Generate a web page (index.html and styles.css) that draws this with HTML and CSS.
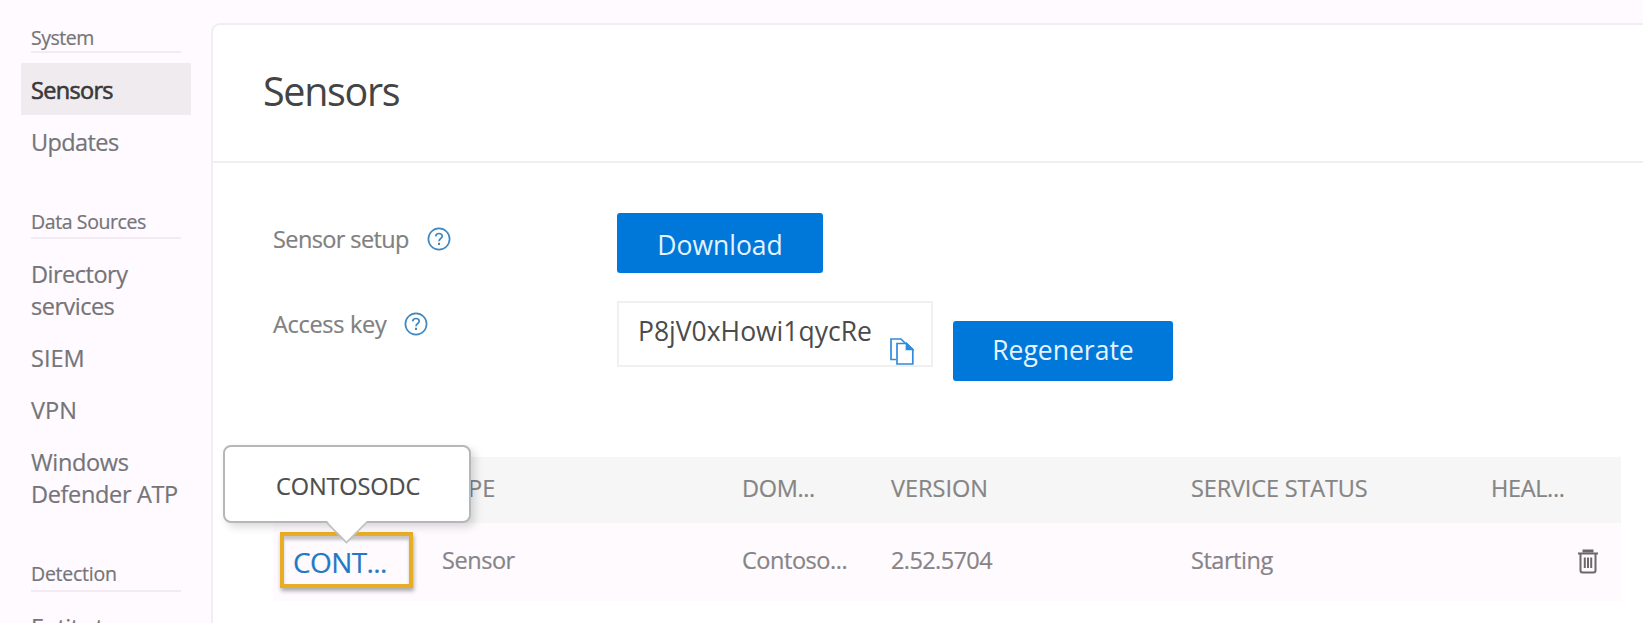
FILE: index.html
```html
<!DOCTYPE html>
<html lang="en">
<head>
<meta charset="utf-8">
<title>Sensors</title>
<link rel="stylesheet" href="styles.css">
</head>
<body>
<div class="app">
  <nav class="sidebar">
    <section class="group">
      <h2 class="group-title title-system">System</h2>
      <a class="item active">Sensors</a>
      <a class="item item-updates">Updates</a>
    </section>
    <section class="group">
      <h2 class="group-title">Data Sources</h2>
      <a class="item">Directory<br>services</a>
      <a class="item caps">SIEM</a>
      <a class="item caps">VPN</a>
      <a class="item item-defender">Windows<br>Defender ATP</a>
    </section>
    <section class="group">
      <h2 class="group-title title-detection">Detection</h2>
      <a class="item">Entity tags</a>
    </section>
  </nav>
  <main class="panel">
    <header class="panel-header"><h1 class="title">Sensors</h1></header>
    <div class="form">
      <div class="row row-setup">
        <div class="label label-setup"><span>Sensor setup</span>
          <svg class="help" viewBox="0 0 24 24"><circle cx="12" cy="12" r="10.6"/><path d="M8.7 9.4C8.8 7.4 10.2 6.5 12 6.5C13.9 6.5 15.2 7.6 15.2 9.2C15.2 11.4 12 11.600 12 14.2"/><path class="dot" d="M12 15.7V17.9"/></svg>
        </div>
        <button class="button download">Download</button>
      </div>
      <div class="row row-key">
        <div class="label label-key"><span>Access key</span>
          <svg class="help" viewBox="0 0 24 24"><circle cx="12" cy="12" r="10.6"/><path d="M8.7 9.4C8.8 7.4 10.2 6.5 12 6.5C13.9 6.5 15.2 7.6 15.2 9.2C15.2 11.4 12 11.600 12 14.2"/><path class="dot" d="M12 15.7V17.9"/></svg>
        </div>
        <div class="key-field"><span class="key-value">P8jV0xHowi1qycRe</span>
          <svg class="copy" viewBox="0 0 24 27"><path d="M6 21.5H1V1H11L15 5"/><path d="M7 5.5H16.5L22.8 11.5V26H7Z"/><path class="fold" d="M16.500 5.500V11.500H22.800Z"/></svg>
        </div>
        <button class="button regenerate">Regenerate</button>
      </div>
    </div>
    <div class="table">
      <div class="tr head">
        <span></span><span>TYPE</span><span class="h-domain">DOM...</span><span>VERSION</span><span class="h-status">SERVICE STATUS</span><span class="h-health">HEAL...</span>
      </div>
      <div class="tr data">
        <span class="cell-name"><a class="name">CONT...</a>
          <span class="tooltip">CONTOSODC<svg class="arrow" viewBox="0 0 42 24"><path class="arrow-fill" d="M1 0L20.5 21L41 0Z"/><path class="arrow-line" d="M1 2L20.5 21.5L40 2"/></svg></span>
        </span>
        <span>Sensor</span><span>Contoso...</span><span class="c-version">2.52.5704</span><span>Starting</span>
        <span class="cell-trash"><svg class="trash" viewBox="0 0 20 25"><path d="M0 4.5H20"/><path class="lid" d="M6 3.500V2H14V3.500"/><path d="M2.5 5V21.5Q2.5 23.5 4.5 23.5H15.5Q17.5 23.5 17.5 21.5V5"/><path class="bars" d="M6.800 8.5V19M10 8.5V19M13.200 8.5V19"/></svg></span>
      </div>
    </div>
  </main>
</div>
</body>
</html>
```
FILE: styles.css
```css
* { box-sizing: border-box; }
body {
  margin: 0;
  height: 623px;
  overflow: hidden;
  background: #fefaff;
  color: #757477;
  font-family: "Open Sans", "Noto Sans", sans-serif;
  font-size: 23.5px;
  line-height: 32px;
  white-space: nowrap;
}
.app { display: flex; height: 623px; overflow: hidden; }
.sidebar { width: 211px; flex: none; padding: 25px 0 0 21px; }
.group { display: flex; flex-direction: column; margin-bottom: 39px; }
.group-title {
  width: 150px;
  height: 33px;
  margin: 0 0 8px 10px;
  padding-top: 3px;
  border-bottom: 2px solid #f3ebf1;
  font-size: 19.5px;
  font-weight: 400;
  letter-spacing: -0.4px;
  line-height: 26px;
  -webkit-text-stroke: 0.2px;
}
.title-system { height: 28px; margin-bottom: 10px; padding-top: 0; letter-spacing: -0.5px; }
.title-detection { height: 34px; letter-spacing: -0.25px; }
.item { width: 170px; padding: 11px 10px 9px; letter-spacing: -0.5px; -webkit-text-stroke: 0.2px; }
.item-updates { letter-spacing: -0.6px; }
.item-defender { letter-spacing: -0.35px; }
.caps { letter-spacing: 0; }
.active { background: #efebef; color: #39383a; letter-spacing: -0.68px; -webkit-text-stroke: 0.6px; }
.panel {
  flex: 1;
  min-width: 0;
  height: 640px;
  margin-top: 23px;
  border: 2px solid #f1eef2;
  border-right: 0;
  border-radius: 9px 0 0 0;
  background: #fff;
}
.panel-header { height: 138px; padding: 39px 0 0 50px; border-bottom: 2px solid #f0eef0; }
.title { margin: 0; color: #444; font-size: 39.5px; font-weight: 400; letter-spacing: -1.35px; line-height: 54px; }
.form { padding: 50px 0 0 60px; height: 294px; }
.row { display: flex; align-items: flex-start; }
.row-setup { height: 88px; }
.label { display: flex; gap: 18px; width: 344px; color: #808080; -webkit-text-stroke: 0.2px; }
.label-setup { padding-top: 10px; letter-spacing: -0.6px; }
.label-key { padding-top: 7px; letter-spacing: -0.3px; }
.help { width: 24px; height: 24px; margin-top: 4px; fill: none; stroke: #3f88c2; stroke-width: 1.7; }
.help .dot { stroke-width: 2; }
.button {
  height: 60px;
  padding: 0;
  border: 0;
  border-radius: 3px;
  background: #0078d9;
  color: #e4f3ff;
  font: inherit;
  font-size: 26.5px;
}
.download { width: 206px; padding-top: 4px; }
.regenerate { width: 220px; margin: 20px 0 0 20px; padding-bottom: 2px; }
.key-field {
  display: flex;
  width: 316px;
  height: 66px;
  border: 2px solid #f0f0f0;
  padding: 12px 0 0 19px;
  color: #4b4b4b;
  font-size: 26.5px;
}
.key-value { width: 252px; }
.copy { width: 24px; height: 27px; margin-top: 23px; fill: none; stroke: #2f8bdc; stroke-width: 1.7; }
.copy .fold { fill: #2f8bdc; }
.table { width: 1348px; margin-left: 60px; }
.tr { display: grid; grid-template-columns: 169px 300px 149px 300px 300px 130px; align-items: start; -webkit-text-stroke: 0.2px; }
.head { height: 66px; background: #f6f6f6; color: #858585; padding-top: 15px; }
.h-status { letter-spacing: -0.15px; }
.h-domain, .h-health { letter-spacing: -0.35px; }
.data { height: 78px; background: #fefafe; color: #868487; padding-top: 21px; letter-spacing: -0.45px; }
.c-version { letter-spacing: -0.6px; }
.cell-name { position: relative; margin: -12px 0 0 7px; width: 133px; }
.name {
  display: block;
  width: 133px;
  height: 56px;
  border: 4px solid #e8ac25;
  padding: 10px 0 0 9px;
  color: #2379c4;
  font-size: 28px;
  letter-spacing: -0.6px;
  box-shadow: 1px 3px 4px #aaa, inset 0 4px 3px #c8c6c9;
}
.tooltip {
  position: absolute;
  left: -57px;
  top: -87px;
  width: 248px;
  height: 78px;
  padding: 23px 0 0 51px;
  border: 2px solid #b5b7b8;
  border-radius: 8px;
  background: #fff;
  color: #4d4d4d;
  letter-spacing: -0.1px;
  box-shadow: 4px 4px 8px rgba(0, 0, 0, .15);
}
.arrow { position: absolute; left: 101px; top: 74px; width: 42px; height: 24px; }
.arrow-fill { fill: #fff; }
.arrow-line { fill: none; stroke: #c0c0c0; stroke-width: 1.7; }
.cell-trash { padding-left: 87px; }
.trash { display: block; width: 20px; height: 25px; margin-top: 5px; fill: none; stroke: #69686a; stroke-width: 2; }
.trash .lid { stroke-width: 3; }
.trash .bars { stroke-width: 2; }
```
